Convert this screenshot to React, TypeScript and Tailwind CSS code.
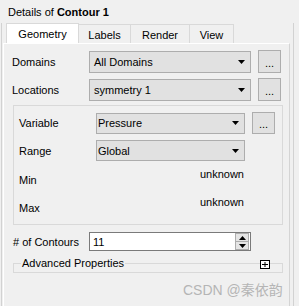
import React from "react";

const Arrow = () => (
  <svg width="7" height="4" viewBox="0 0 7 4">
    <path d="M0 0h7L3.5 4z" fill="#000" />
  </svg>
);

const SmallTri = ({ up }: { up?: boolean }) => (
  <svg width="7" height="4" viewBox="0 0 7 4">
    <path d={up ? "M3.5 0L7 4H0z" : "M0 0h7L3.5 4z"} fill="#000" />
  </svg>
);

function Combo({ value, w, h, pl }: { value: string; w: string; h: string; pl: string }) {
  return (
    <div className={`${w} ${h} ${pl} flex items-center justify-between border border-[#adadad] bg-[#e1e1e1] pr-[5px]`}>
      <span>{value}</span>
      <Arrow />
    </div>
  );
}

function Dots({ h }: { h: string }) {
  return (
    <div className={`ml-[7px] w-[23px] ${h} flex items-end justify-center pb-[4px] border border-[#adadad] bg-[#e1e1e1]`}>
      <span className="leading-[10px]">...</span>
    </div>
  );
}

const tabs = [
  { label: "Geometry", w: "w-[73px]", active: true },
  { label: "Labels", w: "w-[52px]" },
  { label: "Render", w: "w-[59px]" },
  { label: "View", w: "w-[44px]" },
];

export default function App() {
  return (
    <div className="relative w-[299px] h-[306px] overflow-hidden bg-[#f0f0f0] text-[11px] leading-[14px] text-black font-['Liberation_Sans',Arial,sans-serif]">
      {/* Title */}
      <div className="h-[23px] pl-[8px] pt-[5px]">
        Details of <span className="font-bold">Contour 1</span>
      </div>

      <div className="ml-[1px] w-[293px] h-[283px] border-l border-r border-[#d2d2d2] pl-[1px] pr-[3px]">
        {/* Tabs */}
        <div className="flex items-end h-[20px] pl-[3px]">
          {tabs.map((t) =>
            t.active ? (
              <div key={t.label} className={`${t.w} h-[20px] flex items-center justify-center pb-[0px] bg-white border-l border-t border-r border-[#d9d9d9]`}>
                {t.label}
              </div>
            ) : (
              <div key={t.label} className={`${t.w} h-[19px] flex items-center justify-center pt-[1px] border-t border-r border-[#d9d9d9]`}>
                {t.label}
              </div>
            )
          )}
        </div>

        {/* Panel */}
        <div className="h-[263px] border-t border-l border-white border-r border-r-[#d4d4d4]">
          <div className="mt-[6px] h-[23px] flex items-center">
            <span className="w-[85px] pl-[8px]">Domains</span>
            <Combo value="All Domains" w="w-[162px]" h="h-[22px]" pl="pl-[4px]" />
            <Dots h="h-[23px]" />
          </div>
          <div className="mt-[5px] h-[23px] flex items-center">
            <span className="w-[85px] pl-[8px]">Locations</span>
            <Combo value="symmetry 1" w="w-[162px]" h="h-[22px]" pl="pl-[4px]" />
            <Dots h="h-[23px]" />
          </div>

          {/* Variable group */}
          <div className="mt-[4px] ml-[9px] w-[270px] h-[120px] border border-[#d9d9d9] pt-[6px]">
            <div className="h-[22px] flex items-center">
              <span className="w-[82px] pl-[5px]">Variable</span>
              <Combo value="Pressure" w="w-[149px]" h="h-[21px]" pl="pl-[1px]" />
              <Dots h="h-[22px]" />
            </div>
            <div className="mt-[6px] h-[21px] flex items-center">
              <span className="w-[82px] pl-[5px]">Range</span>
              <Combo value="Global" w="w-[149px]" h="h-[21px]" pl="pl-[1px]" />
            </div>
            <div className="mt-[6px] flex">
              <span className="w-[82px] pl-[5px] pt-[6px]">Min</span>
              <span className="w-[149px] text-right pr-[1px]">unknown</span>
            </div>
            <div className="mt-[8px] flex">
              <span className="w-[82px] pl-[5px] pt-[6px]">Max</span>
              <span className="w-[149px] text-right pr-[1px]">unknown</span>
            </div>
          </div>

          {/* # of Contours */}
          <div className="mt-[7px] h-[19px] flex items-center">
            <span className="w-[85px] pl-[9px]">
              # of Contours
            </span>
            <div className="w-[162px] h-[19px] flex items-center justify-between border border-[#7a7a7a] bg-white pl-[3px]">
              <span>11</span>
              <div className="mr-[1px] w-[14px] h-[17px] flex flex-col">
                <div className="h-[9px] flex items-center justify-center border border-[#adadad] bg-[#e5e5e5]">
                  <SmallTri up />
                </div>
                <div className="h-[8px] flex items-center justify-center border border-t-0 border-[#adadad] bg-[#e5e5e5]">
                  <SmallTri />
                </div>
              </div>
            </div>
          </div>

          {/* Advanced Properties (collapsed) */}
          <div className="relative mt-[12px] ml-[9px] w-[270px] h-[10px] border border-[#d9d9d9]">
            <span className="absolute left-[7px] top-[-8px] bg-[#f0f0f0] px-[1px]">Advanced Properties</span>
            <div className="absolute left-[246px] top-[-4px] w-[10px] h-[9px] flex items-center justify-center border border-black bg-white">
              <svg width="6" height="5" viewBox="0 0 6 5">
                <path d="M0 2h6v1H0zM2.5 0h1v5h-1z" fill="#000" />
              </svg>
            </div>
          </div>
        </div>
      </div>

      {/* watermark */}
      <span className="absolute left-[183px] top-[282px] text-[14px] leading-[16px] text-[#b5b5b5] font-['Liberation_Sans','Noto_Sans_CJK_SC',sans-serif]">
        CSDN @秦依韵
      </span>
    </div>
  );
}
